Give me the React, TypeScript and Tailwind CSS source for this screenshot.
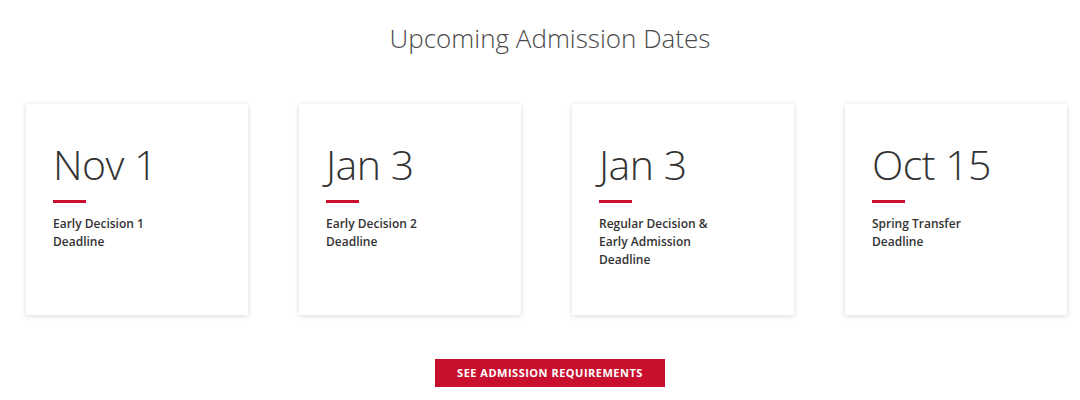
import React from 'react';

const dates = [
  { date: 'Nov 1', label: ['Early Decision 1', 'Deadline'] },
  { date: 'Jan 3', label: ['Early Decision 2', 'Deadline'] },
  { date: 'Jan 3', label: ['Regular Decision &', 'Early Admission', 'Deadline'] },
  { date: 'Oct 15', label: ['Spring Transfer', 'Deadline'] },
];

export default function App() {
  return (
    <div className="w-[1080px] h-[400px] bg-white overflow-hidden" style={{ fontFamily: '"Open Sans", sans-serif' }}>
      <h2 className="pt-[20px] pl-[20px] text-center text-[26px] leading-[36px] font-light text-[#4a4a4a]">
        Upcoming Admission Dates
      </h2>

      <div className="mt-[48px] pl-[26px] flex gap-[51px]">
        {dates.map((d, i) => (
          <div key={i} className="w-[222px] h-[211px] bg-white shadow-[0_1px_5px_rgba(0,0,0,0.16)] pl-[27px] pt-[31px]">
            <div className="text-[41px] leading-[58px] font-light text-[#333] tracking-[-0.5px]">{d.date}</div>
            <div className="mt-[7px] w-[33px] h-[3px] bg-[#c8102e]" />
            <div className="mt-[12px] text-[12px] leading-[18px] font-semibold text-[#333]">
              {d.label.map((l, j) => (
                <div key={j}>{l}</div>
              ))}
            </div>
          </div>
        ))}
      </div>

      <div className="mt-[44px] pl-[20px] flex justify-center">
        <button className="w-[230px] h-[28px] bg-[#c8102e] text-white text-[11px] font-bold tracking-[0.5px]">
          SEE ADMISSION REQUIREMENTS
        </button>
      </div>
    </div>
  );
}
